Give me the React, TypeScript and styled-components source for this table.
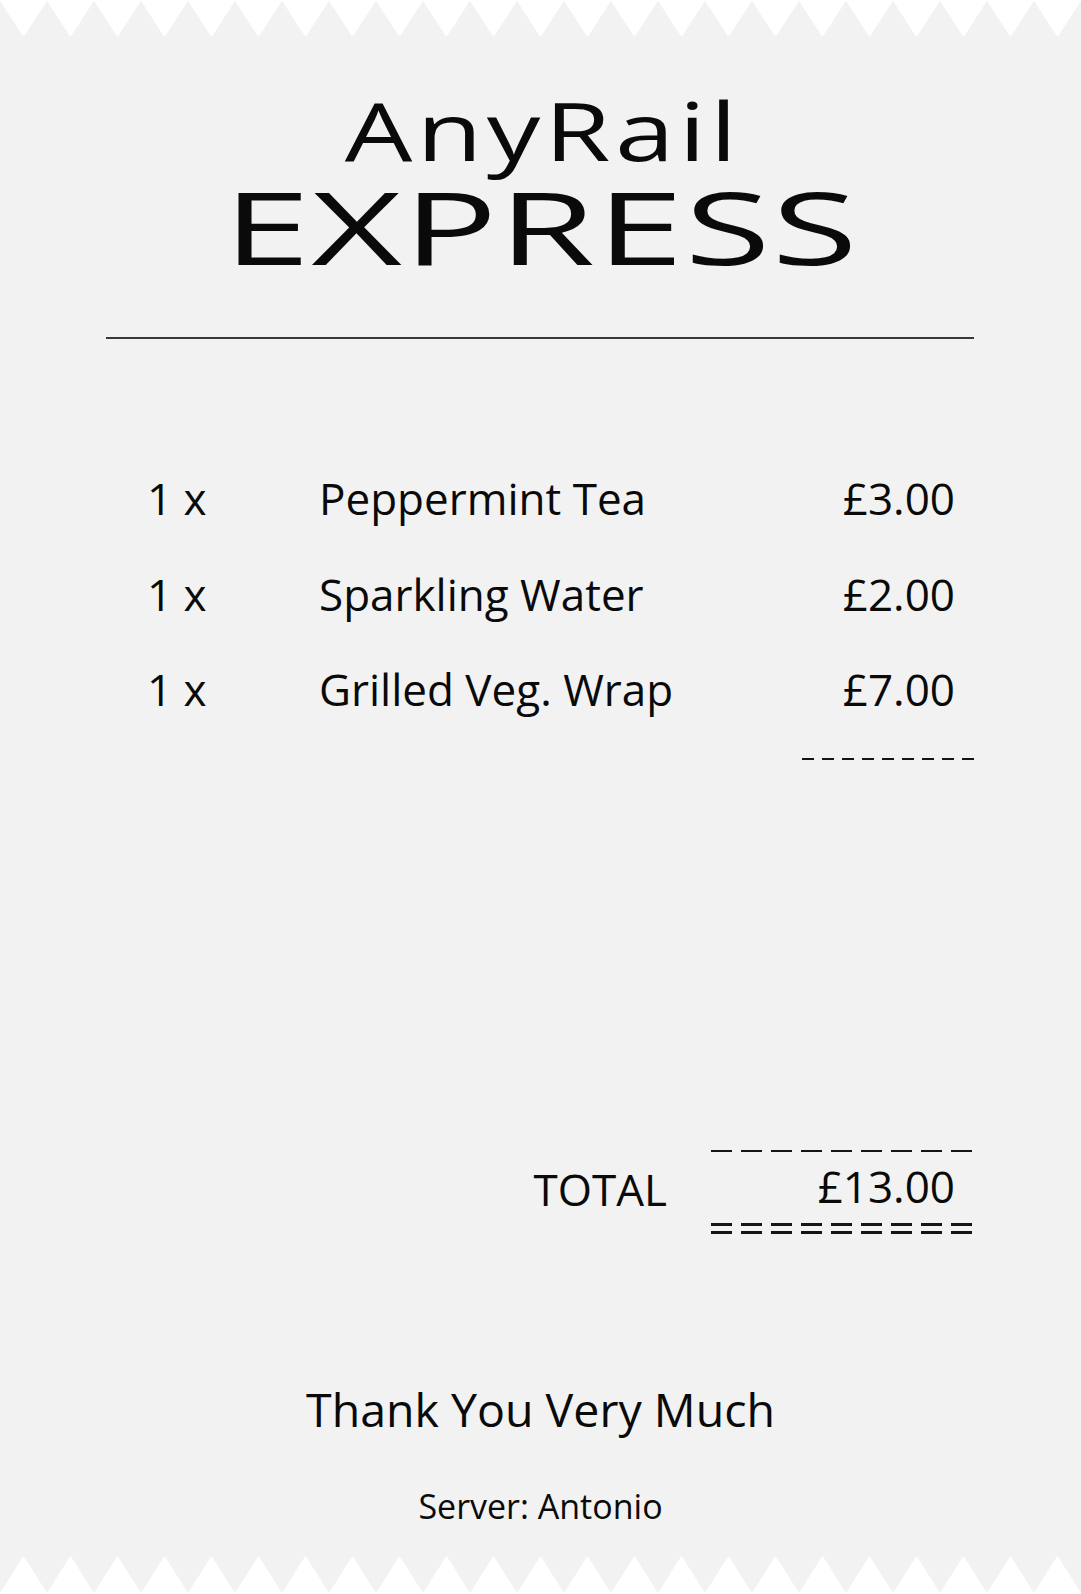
import React from 'react';
import styled, { createGlobalStyle } from 'styled-components';

interface LineItem {
  qty: number;
  name: string;
  price: string;
}

const items: LineItem[] = [
  { qty: 1, name: 'Peppermint Tea', price: '£3.00' },
  { qty: 1, name: 'Sparkling Water', price: '£2.00' },
  { qty: 1, name: 'Grilled Veg. Wrap', price: '£7.00' },
];

const TOOTH = 47; // width of one zigzag tooth
const PAGE_WIDTH = 1081;

// torn paper edge, white teeth cut into the grey receipt
const ZigZag: React.FC<{ bottom?: boolean; height: number }> = ({ bottom, height }) => {
  const count = Math.ceil(PAGE_WIDTH / TOOTH);
  const teeth = Array.from({ length: count }, (_, i) => i * TOOTH);

  return (
    <EdgeSvg $height={height} viewBox={`0 0 ${PAGE_WIDTH} ${height}`} preserveAspectRatio="none">
      {teeth.map((x) => {
        const points = bottom
          ? `${x},${height + 2} ${x + TOOTH},${height + 2} ${x + TOOTH / 2},1.5`
          : `${x},-2 ${x + TOOTH},-2 ${x + TOOTH / 2},${height - 1.5}`;
        return (
          <polygon
            key={x}
            points={points}
            fill="#fff"
            stroke="#fff"
            strokeWidth={3}
            strokeLinejoin="round"
          />
        );
      })}
    </EdgeSvg>
  );
};

export default function App() {
  return (
    <>
      <GlobalStyle />
      <Receipt>
        <ZigZag height={36} />

        <Header>
          <BrandLine $size={81}>
            <BrandText $stretch={1.32} $spacing={3.3}>
              AnyRail
            </BrandText>
          </BrandLine>
          <BrandLine $size={101} $gap={6}>
            <BrandText $stretch={1.55} $spacing={0.8}>
              EXPRESS
            </BrandText>
          </BrandLine>
        </Header>

        <Divider />

        <ItemList>
          {items.map((item) => (
            <ItemRow key={item.name}>
              <span>{item.qty} x</span>
              <span>{item.name}</span>
              <Price>{item.price}</Price>
            </ItemRow>
          ))}
        </ItemList>

        <SubtotalRule $dash={12} $space={8} />

        <TotalSection>
          <TotalLabel>TOTAL</TotalLabel>
          <TotalBlock>
            <DashRule $dash={21} $space={9} />
            <TotalAmount>£13.00</TotalAmount>
            <DoubleRule>
              <DashRule $dash={21} $space={9} $thick={3} />
              <DashRule $dash={21} $space={9} $thick={3} />
            </DoubleRule>
          </TotalBlock>
        </TotalSection>

        <Footer>
          <ThankYou>Thank You Very Much</ThankYou>
          <Server>Server: Antonio</Server>
        </Footer>

        <BottomEdge>
          <ZigZag bottom height={37} />
        </BottomEdge>
      </Receipt>
    </>
  );
}

const GlobalStyle = createGlobalStyle`
  body {
    margin: 0;
    background: #ffffff;
    font-family: "Open Sans", "Noto Sans", sans-serif;
    color: #0a0a0a;
  }
`;

const Receipt = styled.main`
  width: 1081px;
  min-height: 1594px;
  display: flex;
  flex-direction: column;
  background: #f1f2f1;
  overflow: hidden;
`;

const EdgeSvg = styled.svg<{ $height: number }>`
  display: block;
  width: 100%;
  height: ${(p) => p.$height}px;
  flex-shrink: 0;
`;

const BottomEdge = styled.div`
  margin-top: auto;
`;

const Header = styled.header`
  padding-top: 53px;
  text-align: center;
`;

const BrandLine = styled.div<{ $size: number; $gap?: number }>`
  margin-top: ${(p) => p.$gap ?? 0}px;
  font-size: ${(p) => p.$size}px;
  line-height: ${(p) => p.$size}px;
  height: ${(p) => p.$size}px;
`;

// the logo letters are drawn wide, so the word is stretched sideways
const BrandText = styled.span<{ $stretch: number; $spacing: number }>`
  display: inline-block;
  padding-left: ${(p) => p.$spacing}px;
  letter-spacing: ${(p) => p.$spacing}px;
  transform: scaleX(${(p) => p.$stretch});
`;

const Divider = styled.hr`
  margin: 60px 107px 0 106px;
  height: 2px;
  border: 0;
  background: #3a3a3a;
`;

const ItemList = styled.div`
  margin-top: 112px;
  padding: 0 126px 0 147px;
`;

const ItemRow = styled.div`
  display: grid;
  grid-template-columns: 172px 1fr auto;
  font-size: 44px;
  line-height: 95.5px;
`;

const Price = styled.span`
  text-align: right;
`;

const DashRule = styled.div<{ $dash: number; $space: number; $thick?: number }>`
  height: ${(p) => p.$thick ?? 2}px;
  background: repeating-linear-gradient(
    to right,
    #151515 0 ${(p) => p.$dash}px,
    transparent ${(p) => p.$dash}px ${(p) => p.$dash + p.$space}px
  );
`;

const SubtotalRule = styled(DashRule)`
  align-self: flex-end;
  width: 172px;
  margin: 20px 107px 0 0;
`;

const TotalSection = styled.section`
  margin-top: 390px;
  padding-right: 109px;
  display: flex;
  justify-content: flex-end;
  align-items: flex-start;
  gap: 44px;
`;

const TotalLabel = styled.span`
  margin-top: 13px;
  font-size: 44px;
  line-height: 52px;
`;

const TotalBlock = styled.div`
  width: 261px;
  display: flex;
  flex-direction: column;
`;

const TotalAmount = styled.div`
  margin: 8px 0 11px;
  padding-right: 17px;
  text-align: right;
  font-size: 44px;
  line-height: 52px;
`;

const DoubleRule = styled.div`
  display: flex;
  flex-direction: column;
  gap: 5px;
`;

const Footer = styled.footer`
  margin-top: 147px;
  text-align: center;
`;

const ThankYou = styled.div`
  font-size: 46.5px;
  line-height: 56px;
`;

const Server = styled.div`
  margin-top: 49px;
  font-size: 34px;
  line-height: 40px;
`;
